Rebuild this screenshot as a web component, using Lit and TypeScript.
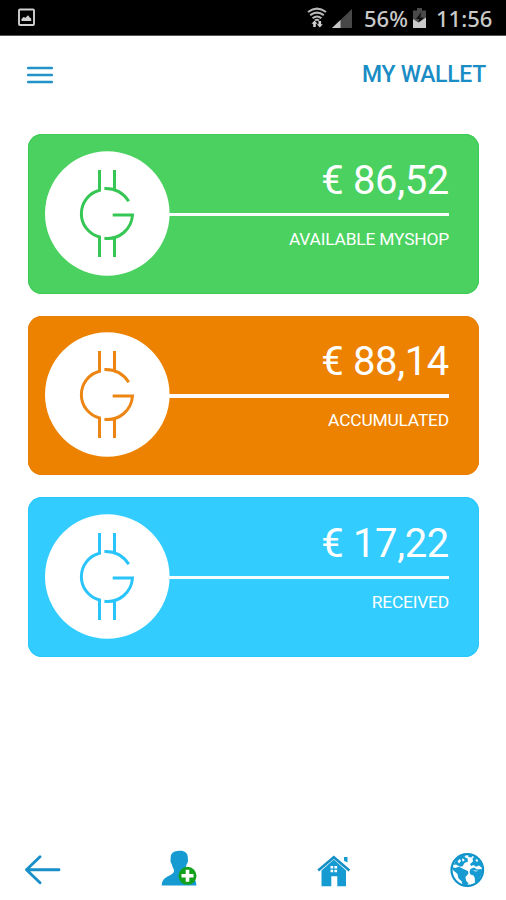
import { LitElement, html, css, svg } from "lit";
import { customElement, property } from "lit/decorators.js";

@customElement("status-bar")
class StatusBar extends LitElement {
  static styles = css`
    :host {
      display: flex;
      box-sizing: border-box;
      height: 36px;
      padding: 0 13px 0 17px;
      align-items: center;
      background: #000;
      border-bottom: 1px solid #555;
      color: #c9c9c9;
      font: 500 22px/36px "Noto Sans", sans-serif;
    }
    svg { display: block; flex: none; }
    .photo { margin-right: auto; }
    .wifi { margin: 1px 5px 0 0; }
    .signal { margin: 2px 12px 0 0; }
    .battery { margin: 2px 10px 0 4px; }
    .text { white-space: pre; margin-top: 1px; }
    .percent { width: 45px; letter-spacing: 0; }
    .time { width: 57px; letter-spacing: 0; }
  `;
  render() {
    return html`
      <svg class="photo" width="19" height="19" viewBox="0 0 19 19">
        <rect x="2" y="1.5" width="15" height="15.5" rx="1" fill="none" stroke="#d0d0d0" stroke-width="1.9" />
        <path d="M4.5 13V11l2-2 2 .7 2.5-2.5 2 2.5 1.2.8V13z" fill="#d0d0d0" />
      </svg>
      <svg class="wifi" width="20" height="22" viewBox="0 0 20 22">
        <g fill="none" stroke="#b8b8b8" stroke-width="2.1">
          <path d="M1 5Q10-1.8 19 5M3.2 8.2Q10 3 16.8 8.2M5.6 11.3Q10 7.7 14.4 11.3M8 13.5Q10 12 12 13.5" />
        </g>
        <path d="M7.5 13.5l3 3.3H8.8V20H6.2v-3.2H4.5zM12.8 20.6l-3-3.3h1.7v-3.2h2.6v3.2h1.7z" fill="#d0d0d0" />
      </svg>
      <svg class="signal" width="20" height="19" viewBox="0 0 20 19">
        <path d="M20 0V19H0z" fill="#484848" />
        <path d="M8.5 11V19H0z" fill="#c8c8c8" />
      </svg>
      <span class="text percent">56%</span>
      <svg class="battery" width="13" height="21" viewBox="0 0 13 21">
        <path d="M4 0h5v2.4h4V20H0V2.4h4z" fill="#4a4a4a" />
        <path d="M8.5 3.8L3 11h3.3L4.800 17l6-7.500H7.200z" fill="#111" />
        <path d="M0 20V11l5.500 3.500L13 9.500V20H0z" fill="#cacaca" />
      </svg>
      <span class="text time">11:56</span>
    `;
  }
}

@customElement("wallet-card")
class WalletCard extends LitElement {
  @property() amount = "";
  @property() label = "";
  @property() tone = "green";

  static styles = css`
    :host { display: block; height: 159.5px; }
    .card {
      display: flex;
      box-sizing: border-box;
      height: 100%;
      padding: 16.5px 30px 0 16.5px;
      border-radius: 14px;
      color: #fff;
      font-family: Roboto, sans-serif;
    }
    .green { background: #4ad15f; box-shadow: inset 0 0 0 1px #3bcb55; --ink: #35c653; }
    .orange { background: #ec8200; box-shadow: inset 0 0 0 1px #e98005; --ink: #ec8512; }
    .blue { background: #33ccff; box-shadow: inset 0 0 0 1px #28c7fc; --ink: #29c5fa; }
    .coin { display: block; flex: none; width: 125px; height: 125px; }
    .ink { fill: none; stroke: var(--ink); stroke-width: 3; }
    .info {
      display: flex;
      flex: 1;
      flex-direction: column;
      align-items: flex-end;
      margin-left: -1px;
      white-space: nowrap;
    }
    .amount { height: 61.8px; font-size: 40px; line-height: 59.6px; letter-spacing: -0.35px; }
    .rule { width: 100%; height: 3.4px; background: #fff; opacity: 0.96; }
    .label { margin-top: 12.7px; font-size: 17.4px; line-height: 20px; letter-spacing: -0.2px; }
  `;
  render() {
    return html`
      <div class="card ${this.tone}">
        <svg class="coin" viewBox="0 0 125 125">
          <circle cx="62.3" cy="62.5" r="62.3" fill="#fff" />
          <path class="ink" d="M54.5 19V39.3A24.1 24.1 0 0 0 54.5 86V106M69.500 19V38.200M59.400 37.500Q75.200 37 83.700 50.200M67.700 64H87.500A25 25 0 0 1 59.400 87.300M69.500 87V106" />
        </svg>
        <div class="info">
          <div class="amount">${this.amount}</div>
          <div class="rule"></div>
          <div class="label">${this.label}</div>
        </div>
      </div>
    `;
  }
}

const menuIcon = svg`<path d="M1.3 2H24.7M1.3 9H24.7M1.3 16H24.7" fill="none" stroke="#2292c8" stroke-width="2.7" stroke-linecap="round" />`;

@customElement("app-root")
class AppRoot extends LitElement {
  static styles = css`
    :host {
      display: flex;
      flex-direction: column;
      height: 900px;
      background: #fff;
      font-family: Roboto, sans-serif;
    }
    svg { display: block; flex: none; }
    .header {
      display: flex;
      height: 77px;
      align-items: center;
      justify-content: space-between;
      padding: 0 20px 0 26.5px;
    }
    .title { color: #1b8dc5; font-size: 23px; font-weight: 500; letter-spacing: -0.3px; line-height: 28px; }
    .cards {
      display: flex;
      flex: 1;
      flex-direction: column;
      gap: 22px;
      padding: 21.4px 27px 0 28px;
    }
    .nav {
      display: flex;
      height: 60px;
      align-items: center;
      justify-content: space-between;
      padding: 0 21px 0 24px;
    }
    .person { margin: -3px 0 0 1px; }
    .house { margin: 2px 0 0 20px; }
  `;
  render() {
    return html`
      <status-bar></status-bar>
      <div class="header">
        <svg width="26" height="18" viewBox="0 0 26 18">${menuIcon}</svg>
        <div class="title">MY WALLET</div>
      </div>
      <div class="cards">
        <wallet-card tone="green" amount="€ 86,52" label="AVAILABLE MYSHOP"></wallet-card>
        <wallet-card tone="orange" amount="€ 88,14" label="ACCUMULATED"></wallet-card>
        <wallet-card tone="blue" amount="€ 17,22" label="RECEIVED"></wallet-card>
      </div>
      <div class="nav">
        <svg width="37" height="30" viewBox="0 0 37 30">
          <path d="M16 1.8L2.5 14.8 16 27.8M2.5 14.8H35" fill="none" stroke="#198fc8" stroke-width="2.9" stroke-linecap="round" stroke-linejoin="round" />
        </svg>
        <svg class="person" width="36" height="37" viewBox="0 0 36 37">
          <path d="M18 .8C23 .2 27 3 26.8 7.5c0 1.5.4 2 .1 4-.2 1.5-.8 1.8-1.2 2.6-.7 3.5-1.7 4.3-1.7 6.5 0 4 11.4 4 11.4 14.9H.8C.8 25 13 26.5 13 20.8c0-2.3-1.5-3.1-2.2-6.6-.4-.9-1-1.2-1.2-2.7-.2-1.8.1-2.2.1-4C9.7 3 13 1.2 18 .8z" fill="#159bd2" />
          <circle cx="26.5" cy="25.8" r="9" fill="#13a01b" />
          <path d="M26.5 19.8v12M20.5 25.8h12" stroke="#fff" stroke-width="3.6" />
        </svg>
        <svg class="house" width="34" height="32" viewBox="0 0 34 32">
          <path d="M4.5 15.5L16.8 4.5 29 15.5V31.3H20.3V21.3H14.3V31.3H4.5z" fill="#159bd2" />
          <path d="M1.2 15.5L16.8 2.2 32.4 15.5" fill="none" stroke="#168fc5" stroke-width="2.5" />
          <path d="M27 2h3.5v5.5L27 5.8z" fill="#159bd2" />
          <path d="M13.5 11h2.7v2.6h-2.7zM17.4 11h2.7v2.6h-2.7zM13.5 14.8h2.7v2.5h-2.7zM17.4 14.8h2.7v2.5h-2.7z" fill="#fff" />
        </svg>
        <svg width="35" height="35" viewBox="0 0 35 35">
          <circle cx="17.3" cy="17" r="15.8" fill="#fff" stroke="#0f91c9" stroke-width="2.2" />
          <path d="M1.5 13.5L5 15 9 13.8 13.5 16 17.8 18 18.5 20.5 15.5 24 16 27.5 18.5 30.5 17 32.5 12.5 31.5 11.5 28 8.5 25.5 7.5 21 3 17zM6 7L11 2.5 16 1.5 14.5 4 17.5 5.5 18 8.5 14.5 10 12.5 13.5 9.5 13.5 6 11.5 3.5 12zM18 1.5H23L21.5 4.5 18.5 4zM25 3L30 7 33.3 14 31.5 14.5 29 12.5 26 13.8 23.5 12 21 13 20 11 23 8.5 22.5 5.5zM20.5 16L24 14.5 27 16.5 31.5 16 33 19 30.5 23.5 28 29 25 31 24.8 25 23.5 22.5 20.5 21.5 19.5 19z" fill="#159bd2" />
          <path d="M7.5 8l2.5-2 1 2-2 2.5zM12 5.5l2 .5.5 2-2 .5zM26 6l2 1-.5 2-2-1zM22.5 17l3 1.5 3-.5" fill="#fff" />
        </svg>
      </div>
    `;
  }
}
